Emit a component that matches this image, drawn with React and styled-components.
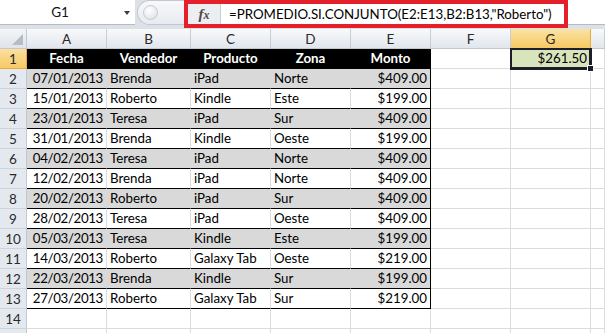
import React from "react";
import styled, { createGlobalStyle } from "styled-components";

const GlobalStyle = createGlobalStyle`
  html, body {
    margin: 0;
    padding: 0;
    background: #ffffff;
  }
  body {
    font-family: Lato, "Liberation Sans", sans-serif;
  }
`;

const COLS = "27px 80px 84px 80px 80px 80px 80px 80px 1fr";
const GRID = "#dadcdd";

const Sheet = styled.div`
  width: 605px;
  height: 333px;
  overflow: hidden;
  background: #fff;
  display: flex;
  flex-direction: column;
`;

const Toolbar = styled.div`
  display: flex;
  align-items: flex-start;
  height: 29px;
  flex-shrink: 0;
  background: #dce1e8;
`;

const NameBox = styled.div`
  width: 135px;
  height: 25px;
  box-sizing: border-box;
  background: #fff;
  border-bottom: 1px solid #b4bbc5;
  display: flex;
  align-items: center;
`;

const NameText = styled.span`
  width: 120px;
  text-align: center;
  font-size: 13.5px;
  color: #111;
`;

const Caret = styled.span`
  width: 0;
  height: 0;
  margin-left: 4px;
  margin-top: 2px;
  border-left: 3.5px solid transparent;
  border-right: 3.5px solid transparent;
  border-top: 4px solid #3c3c3c;
`;

const Splitter = styled.div`
  width: 47px;
  height: 25px;
  margin-left: 2px;
  box-sizing: border-box;
  border: 1px solid #c3c8cf;
  border-right: none;
  border-radius: 13px 0 0 13px;
  background: linear-gradient(#f7f8fa, #e8ebef);
  display: flex;
  align-items: center;
  padding-left: 5px;
`;

const Knob = styled.span`
  width: 13px;
  height: 13px;
  border-radius: 50%;
  border: 1px solid #c5cad1;
  background: radial-gradient(circle at 40% 35%, #ffffff, #d9dde2);
`;

const RedFrame = styled.div`
  width: 384px;
  height: 28px;
  box-sizing: border-box;
  border: 4px solid #e4202a;
  display: flex;
  background: #fff;
`;

const FxBox = styled.div`
  width: 33px;
  box-sizing: border-box;
  background: #eceef1;
  border-right: 1px solid #c9ced5;
  display: flex;
  align-items: center;
  justify-content: center;
  font-family: "Liberation Serif", serif;
  font-style: italic;
  font-weight: 700;
  font-size: 15px;
  color: #4a4a4a;
`;

const FxSub = styled.span`
  font-size: 12px;
  margin-top: 3px;
`;

const Formula = styled.div`
  flex: 1;
  display: flex;
  align-items: center;
  padding-left: 8px;
  font-size: 13.3px;
  color: #000;
  white-space: nowrap;
`;

const ToolbarRest = styled.div`
  flex: 1;
  height: 25px;
  box-sizing: border-box;
  background: #fff;
  border-bottom: 1px solid #b4bbc5;
`;

const Row = styled.div`
  display: grid;
  grid-template-columns: ${COLS};
  height: 20px;
  flex-shrink: 0;
`;

const Corner = styled.div`
  box-sizing: border-box;
  background: linear-gradient(#f3f5f8, #dfe4ea);
  border-right: 1px solid #c2c8d0;
  border-bottom: 1px solid #c2c8d0;
  position: relative;
  &::after {
    content: "";
    position: absolute;
    right: 3px;
    bottom: 3px;
    border-left: 11px solid transparent;
    border-bottom: 11px solid #b6bcc4;
  }
`;

const ColHead = styled.div`
  box-sizing: border-box;
  display: flex;
  align-items: center;
  justify-content: center;
  font-size: 13.5px;
  color: #2a2a2a;
  background: ${({ $active }) =>
    $active
      ? "linear-gradient(#fbe3a4, #f6c862)"
      : "linear-gradient(#f8f9fb, #e1e6ec)"};
  border-right: 1px solid ${({ $active }) => ($active ? "#e6ad43" : "#c8ced6")};
  border-bottom: 1px solid ${({ $active }) => ($active ? "#e6ad43" : "#c2c8d0")};
`;

const RowHead = styled.div`
  box-sizing: border-box;
  display: flex;
  align-items: center;
  justify-content: center;
  font-size: 13.5px;
  color: #2a2a2a;
  background: ${({ $active }) =>
    $active ? "linear-gradient(#fbe0a0, #f6c965)" : "#e4e9ef"};
  border-right: 1px solid ${({ $active }) => ($active ? "#e6ad43" : "#c2c8d0")};
  border-bottom: 1px solid ${({ $active }) => ($active ? "#e6ad43" : "#cdd3da")};
`;

const Cell = styled.div`
  box-sizing: border-box;
  display: flex;
  align-items: flex-end;
  justify-content: ${({ $align }) =>
    $align === "right" ? "flex-end" : $align === "center" ? "center" : "flex-start"};
  padding: 0 3px 2px 3px;
  font-size: 13.3px;
  letter-spacing: ${({ $tight }) => ($tight ? "-0.35px" : "normal")};
  font-weight: ${({ $bold }) => ($bold ? 700 : 400)};
  color: ${({ $color }) => $color || "#000"};
  background: ${({ $bg }) => $bg || "#fff"};
  border-right: 1px solid ${({ $right }) => $right || GRID};
  border-bottom: 1px solid ${({ $bottom }) => $bottom || GRID};
  white-space: nowrap;
`;

const Selected = styled(Cell)`
  position: relative;
  z-index: 1;
  background: #d8e4bc;
  box-shadow: 0 0 0 1px #1d1d2b, inset 0 0 0 1px #1d1d2b;
  border-right-color: #1d1d2b;
  border-bottom-color: #1d1d2b;
`;

const FillHandle = styled.span`
  position: absolute;
  right: -4px;
  bottom: -4px;
  width: 5px;
  height: 5px;
  background: #1d1d2b;
  border: 1px solid #fff;
`;

const letters = ["A", "B", "C", "D", "E", "F", "G", ""];
const headers = ["Fecha", "Vendedor", "Producto", "Zona", "Monto"];
const data = [
  ["07/01/2013", "Brenda", "iPad", "Norte", "$409.00"],
  ["15/01/2013", "Roberto", "Kindle", "Este", "$199.00"],
  ["23/01/2013", "Teresa", "iPad", "Sur", "$409.00"],
  ["31/01/2013", "Brenda", "Kindle", "Oeste", "$199.00"],
  ["04/02/2013", "Teresa", "iPad", "Norte", "$409.00"],
  ["12/02/2013", "Brenda", "iPad", "Norte", "$409.00"],
  ["20/02/2013", "Roberto", "iPad", "Sur", "$409.00"],
  ["28/02/2013", "Teresa", "iPad", "Oeste", "$409.00"],
  ["05/03/2013", "Teresa", "Kindle", "Este", "$199.00"],
  ["14/03/2013", "Roberto", "Galaxy Tab", "Oeste", "$219.00"],
  ["22/03/2013", "Brenda", "Kindle", "Sur", "$199.00"],
  ["27/03/2013", "Roberto", "Galaxy Tab", "Sur", "$219.00"],
];
const align = ["right", "left", "left", "left", "right"];

const EmptyCells = ({ count }) =>
  Array.from({ length: count }).map((_, i) => <Cell key={"e" + i} />);

const App = () => {
  return (
    <>
      <GlobalStyle />
      <Sheet>
        <Toolbar>
          <NameBox>
            <NameText>G1</NameText>
            <Caret />
          </NameBox>
          <Splitter>
            <Knob />
          </Splitter>
          <RedFrame>
            <FxBox>
              f<FxSub>x</FxSub>
            </FxBox>
            <Formula>=PROMEDIO.SI.CONJUNTO(E2:E13,B2:B13,"Roberto")</Formula>
          </RedFrame>
          <ToolbarRest />
        </Toolbar>

        <Row>
          <Corner />
          {letters.map((l, i) => (
            <ColHead key={i} $active={l === "G"}>
              {l}
            </ColHead>
          ))}
        </Row>

        <Row>
          <RowHead $active>1</RowHead>
          {headers.map((h) => (
            <Cell key={h} $align="center" $bold $color="#fff" $bg="#000" $right="#000" $bottom="#000">
              {h}
            </Cell>
          ))}
          <Cell />
          <Selected $align="right">
            $261.50
            <FillHandle />
          </Selected>
          <Cell />
        </Row>

        {data.map((r, ri) => {
          const gray = ri % 2 === 0;
          return (
            <Row key={ri}>
              <RowHead>{ri + 2}</RowHead>
              {r.map((v, ci) => (
                <Cell
                  key={ci}
                  $align={align[ci]}
                  $tight={ci === 0}
                  $bg={gray ? "#d9d9d9" : "#fff"}
                  $right={ci === 4 ? "#000" : gray ? "#d9d9d9" : GRID}
                  $bottom="#000"
                >
                  {v}
                </Cell>
              ))}
              <EmptyCells count={3} />
            </Row>
          );
        })}

        <Row>
          <RowHead>14</RowHead>
          <EmptyCells count={8} />
        </Row>
        <Row>
          <RowHead />
          <EmptyCells count={8} />
        </Row>
      </Sheet>
    </>
  );
};

export default App;
